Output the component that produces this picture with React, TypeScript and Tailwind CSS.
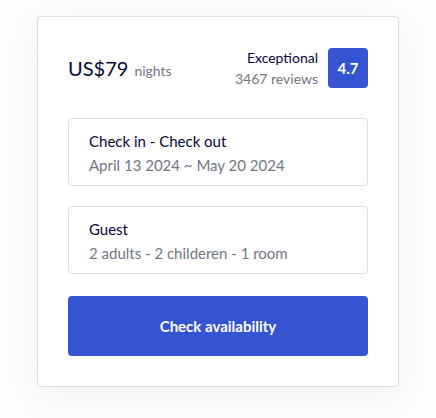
import React from 'react';

const App: React.FC = () => {
  return (
    <div
      className="min-h-screen bg-[#fdfdfd] pt-4"
      style={{ fontFamily: 'Lato, "Open Sans", sans-serif' }}
    >
      <div className="mx-auto w-[362px] rounded border border-[#dddddd] bg-white px-[30px] pt-[31px] pb-[30px] shadow-[0_10px_40px_rgba(0,0,0,0.05)]">
        {/* Price + rating */}
        <div className="flex h-10 items-center justify-between">
          <div className="flex items-baseline gap-1.5">
            <span className="text-[20px] text-[#05073c]">US$79</span>
            <span className="text-[14px] text-[#717782]">nights</span>
          </div>
          <div className="flex items-center gap-2.5">
            <div className="text-right leading-[21px]">
              <div className="text-[14px] text-[#05073c]">Exceptional</div>
              <div className="text-[14px] text-[#717782]">3467 reviews</div>
            </div>
            <div className="flex h-10 w-10 items-center justify-center rounded bg-[#3554d1] text-[15px] font-bold text-white">
              4.7
            </div>
          </div>
        </div>

        {/* Dates */}
        <div className="mt-[30px] rounded border border-[#dddddd] px-5 pt-[10px] pb-2">
          <div className="text-[15px] leading-6 text-[#05073c]">Check in - Check out</div>
          <div className="text-[15px] leading-6 text-[#717782]">April 13 2024 ~ May 20 2024</div>
        </div>

        {/* Guests */}
        <div className="mt-5 rounded border border-[#dddddd] px-5 pt-[10px] pb-2">
          <div className="text-[15px] leading-6 text-[#05073c]">Guest</div>
          <div className="text-[15px] leading-6 text-[#717782]">2 adults - 2 childeren - 1 room</div>
        </div>

        <button className="mt-[22px] flex h-[60px] w-full items-center justify-center rounded bg-[#3554d1] text-[15px] font-bold text-white">
          Check availability
        </button>
      </div>
    </div>
  );
};

export default App;
